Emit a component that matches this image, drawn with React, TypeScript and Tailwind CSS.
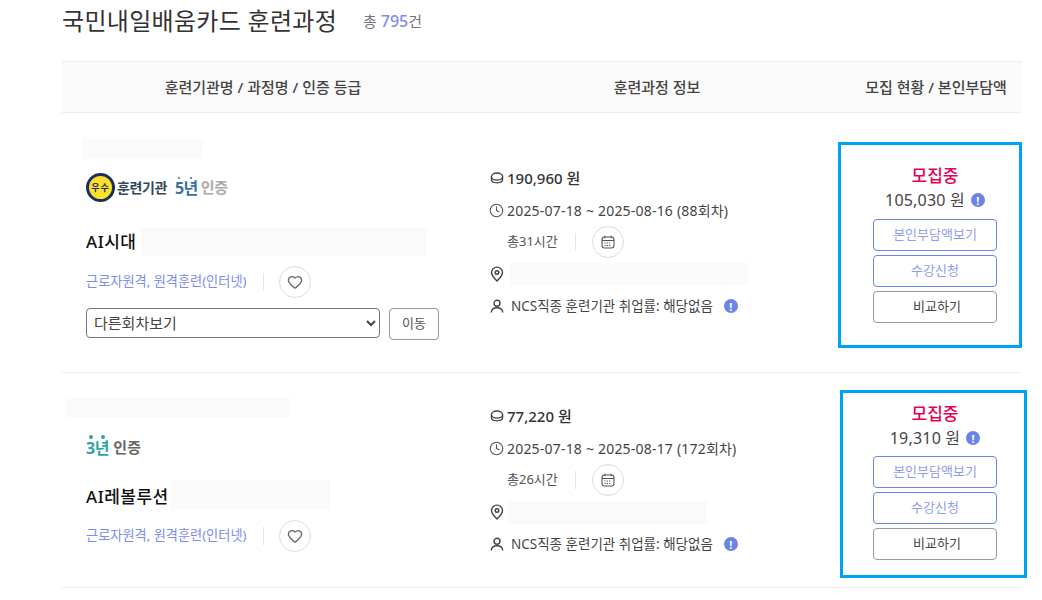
import React from 'react';
import { Clock, Heart } from 'lucide-react';

type Course = {
    fee: string;
    period: string;
    hours: string;
    selfPay: string;
    name: string;
    nameOffset: string;
    badge: React.ReactNode;
    topPatch: string;
    badgeBox: string;
    titleRow: string;
    titlePatch: string;
    leftPad: string;
    midPad: string;
    rightPad: string;
    buttonGap: string;
    pinPatch: string;
    hasSelect: boolean;
    height: string;
    frame: string;
};

const InfoDot = () => (
    <span className="flex h-[14px] w-[14px] shrink-0 items-center justify-center rounded-full bg-[#6b84e8] text-[11px] font-bold leading-none text-white">!</span>
);

const CoinIcon = () => (
    <svg width="14" height="14" viewBox="0 0 14 14" fill="none" stroke="#444" strokeWidth="1.3">
        <ellipse cx="7" cy="5.6" rx="5.6" ry="3.6" />
        <path d="M1.4 5.6v3c0 2 2.5 3.2 5.6 3.2s5.6-1.2 5.6-3.2v-3" />
    </svg>
);

const PinIcon = () => (
    <svg width="14" height="16" viewBox="0 0 14 16" fill="none" stroke="#444" strokeWidth="1.4">
        <path d="M7 15C4 12.2 1.5 9.600 1.5 6.600a5.500 5.500 0 0 1 11 0C12.500 9.600 10 12.200 7 15z" />
        <circle cx="7" cy="6.500" r="1.800" />
    </svg>
);

const PersonIcon = () => (
    <svg width="14" height="14" viewBox="0 0 14 14" fill="none" stroke="#444" strokeWidth="1.4">
        <circle cx="7" cy="4.300" r="3" />
        <path d="M1.200 13.500c.4-3 2.600-4.700 5.800-4.700s5.400 1.700 5.800 4.700" />
    </svg>
);

const CalendarIcon = () => (
    <svg width="14" height="14" viewBox="0 0 14 14" fill="none" stroke="#555" strokeWidth="1.1">
        <rect x="1" y="2" width="12" height="11" rx="2.500" />
        <path d="M1 5.500h12M4 .8v2.400M10 .8v2.400" />
        <path d="M3.500 8h7M3.500 10.500h7" strokeDasharray="1.200 1.100" />
    </svg>
);

const RoundButton = ({ children }: { children: React.ReactNode }) => (
    <span className="flex h-8 w-8 items-center justify-center rounded-full border border-[#dddddd]">{children}</span>
);

const Divider = () => <span className="h-[18px] w-px bg-[#e4e4e4]" />;

const BestBadge = () => (
    <div className="flex items-center">
        <span className="flex h-[29px] w-[29px] items-center justify-center rounded-full border-[3px] border-[#1d2f5f] bg-[#fbe02c] text-[9px] font-bold tracking-[1px] text-[#1d2f5f]">우수</span>
        <span className="ml-[2px] text-[14px] font-bold tracking-[-0.4px] text-[#33475b]">훈련기관</span>
        <span className="relative ml-2 text-[16px] font-bold tracking-[-0.5px] text-[#3b6f9e]">
            5년
            <span className="absolute left-[3px] top-[1px] h-[2px] w-[2px] rounded-full bg-[#3b6f9e]" />
            <span className="absolute left-[15px] top-[1px] h-[2px] w-[2px] rounded-full bg-[#3b6f9e]" />
        </span>
        <span className="ml-[3px] text-[15px] font-bold tracking-[-0.3px] text-[#a9a9a9]">인증</span>
    </div>
);

const ThreeYearBadge = () => (
    <div className="flex items-center">
        <span className="relative text-[16px] font-bold tracking-[-0.3px] text-[#2fa3a3]">
            3년
            <span className="absolute left-[3px] top-[-1px] h-1 w-1 rounded-full bg-[#2fa3a3]" />
            <span className="absolute left-[15px] top-[-1px] h-1 w-1 rounded-full bg-[#2fa3a3]" />
        </span>
        <span className="ml-1 text-[15px] font-bold tracking-[0.2px] text-[#666666]">인증</span>
    </div>
);

const COURSES: Course[] = [
    {
        fee: '190,960 원',
        period: '2025-07-18 ~ 2025-08-16 (88회차)',
        hours: '총31시간',
        selfPay: '105,030 원',
        name: 'AI시대',
        nameOffset: '',
        badge: <BestBadge />,
        topPatch: 'ml-[-4px] w-[121px]',
        badgeBox: 'mt-[13px] h-[31px]',
        titleRow: 'mt-[25px] h-[28px]',
        titlePatch: 'ml-[5px] w-[286px] h-[28px]',
        leftPad: 'pt-[26px]',
        midPad: 'pt-[49px]',
        rightPad: 'pt-[51px]',
        buttonGap: 'mt-[7px]',
        pinPatch: 'ml-[5px] w-[239px] h-[23px]',
        hasSelect: true,
        height: 'h-[260px]',
        frame: 'left-[838px] top-[142px] h-[206px] w-[184px]',
    },
    {
        fee: '77,220 원',
        period: '2025-07-18 ~ 2025-08-17 (172회차)',
        hours: '총26시간',
        selfPay: '19,310 원',
        name: 'AI레볼루션',
        nameOffset: 'mt-[3px]',
        badge: <ThreeYearBadge />,
        topPatch: 'ml-[-21px] w-[225px]',
        badgeBox: 'mt-[18px] h-[25px]',
        titleRow: 'mt-5 h-[30px]',
        titlePatch: 'ml-[2px] w-[160px] h-[30px]',
        leftPad: 'pt-6',
        midPad: 'pt-[27px]',
        rightPad: 'pt-[29px]',
        buttonGap: 'mt-[6px]',
        pinPatch: 'ml-[4px] w-[199px] h-[23px]',
        hasSelect: false,
        height: 'h-[215px]',
        frame: 'left-[840px] top-[390px] h-[188px] w-[187px]',
    },
];

const CourseRow = ({ course }: { course: Course }) => (
    <div className={`grid grid-cols-[402px_386px_172px] border-b border-[#eeeeee] ${course.height}`}>
        <div className={`pl-6 ${course.leftPad}`}>
            <div className={`h-5 bg-[#fafafa] ${course.topPatch}`} />
            <div className={`flex items-center ${course.badgeBox}`}>{course.badge}</div>
            <div className={`flex items-center ${course.titleRow}`}>
                <span className={`text-[17px] font-medium tracking-[0.5px] text-[#111111] ${course.nameOffset}`}>{course.name}</span>
                <span className={`bg-[#fafafa] ${course.titlePatch}`} />
            </div>
            <div className="mt-[10px] flex h-8 items-center">
                <span className="w-[177px] text-[13.2px] text-[#7c8cf0]">근로자원격, 원격훈련(인터넷)</span>
                <Divider />
                <span className="ml-[15px]">
                    <RoundButton><Heart size={16} strokeWidth={2} color="#666666" /></RoundButton>
                </span>
            </div>
            {course.hasSelect && (
                <div className="mt-[10px] flex items-start">
                    <select className="h-[30px] w-[294px] rounded-[4px] border border-[#767676] bg-white pl-[3px] text-[15px] text-[#444444]">
                        <option>다른회차보기</option>
                    </select>
                    <button className="ml-[9px] h-8 w-[50px] rounded-[4px] border border-[#999999] text-[13px] text-[#555555]">이동</button>
                </div>
            )}
        </div>

        <div className={`pl-[26px] text-[#444444] ${course.midPad}`}>
            <div className="flex h-8 items-center">
                <CoinIcon />
                <span className="ml-[3px] text-[15px] font-medium text-[#333333]">{course.fee}</span>
            </div>
            <div className="flex h-8 items-center">
                <Clock size={15} strokeWidth={1.8} color="#555555" className="ml-[-1px]" />
                <span className="ml-[3px] text-[14px] tracking-[0.2px]">{course.period}</span>
            </div>
            <div className="flex h-8 items-center pl-[17px] text-[13px]">
                <span className="w-[68px] text-[#555555]">{course.hours}</span>
                <Divider />
                <span className="ml-4"><RoundButton><CalendarIcon /></RoundButton></span>
            </div>
            <div className="flex h-8 items-center">
                <PinIcon />
                <span className={`bg-[#fafafa] ${course.pinPatch}`} />
            </div>
            <div className="flex h-8 items-center text-[13.5px]">
                <PersonIcon />
                <span className="ml-[7px]">NCS직종 훈련기관 취업률: 해당없음</span>
                <span className="ml-[11px]"><InfoDot /></span>
            </div>
        </div>

        <div className={`flex flex-col items-center pr-[2px] ${course.rightPad}`}>
            <div className="h-6 text-[17px] font-medium leading-6 text-[#e5005a]">모집중</div>
            <div className="flex h-6 items-center gap-[6px] text-[16px] tracking-[0.2px] text-[#444444]">
                {course.selfPay}
                <InfoDot />
            </div>
            <div className={`flex w-[124px] flex-col gap-1 text-[13px] ${course.buttonGap}`}>
                <button className="h-8 rounded-[4px] border border-[#6b84e8] text-[#8f9df0]">본인부담액보기</button>
                <button className="h-8 rounded-[4px] border border-[#6b84e8] text-[#8f9df0]">수강신청</button>
                <button className="h-8 rounded-[4px] border border-[#999999] pl-1 text-[#444444]">비교하기</button>
            </div>
        </div>
    </div>
);

export default function App() {
    return (
        <div className="relative h-[600px] w-[1042px] overflow-hidden bg-white font-['Noto_Sans','Noto_Sans_CJK_KR',sans-serif]">
            <div className="ml-[62px] w-[960px]">
                <div className="flex h-[61px] items-start pt-[3px]">
                    <h1 className="text-[24px] font-normal leading-9 tracking-[0.3px] text-[#333333]">국민내일배움카드 훈련과정</h1>
                    <p className="ml-[26px] mt-[6px] text-[15px] text-[#777777]">
                        총 <span className="text-[16px] font-medium text-[#7c8cf0]">795</span>건
                    </p>
                </div>
                <div className="grid h-[52px] grid-cols-[402px_386px_172px] items-center border-y border-[#eeeeee] bg-[#fafafa] text-[15px] font-medium text-[#444444]">
                    <span className="text-center">훈련기관명 / 과정명 / 인증 등급</span>
                    <span className="text-center">훈련과정 정보</span>
                    <span className="text-center">모집 현황 / 본인부담액</span>
                </div>
                {COURSES.map(course => (
                    <CourseRow key={course.name} course={course} />
                ))}
            </div>
            {COURSES.map(course => (
                <div key={course.name} className={`absolute border-[3px] border-[#00a2f5] ${course.frame}`} />
            ))}
        </div>
    );
}
